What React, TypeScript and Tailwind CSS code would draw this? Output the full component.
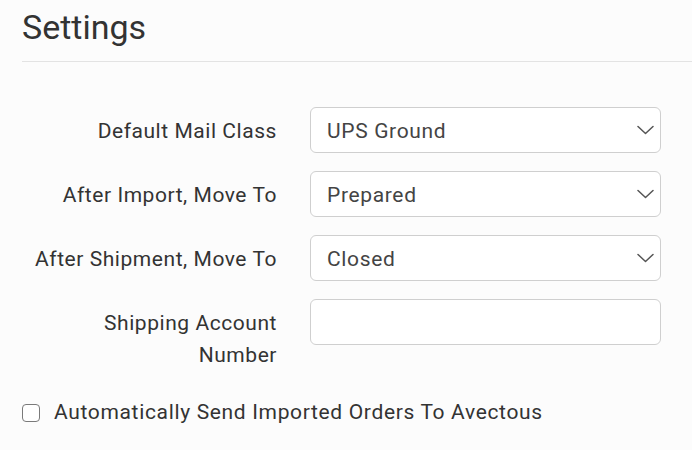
import { ChangeEvent, useState } from "react";

const font = { fontFamily: "Roboto, 'Liberation Sans', sans-serif" };

const Chevron = () => (
    <svg
        className="pointer-events-none absolute right-[7px] top-1/2 -translate-y-1/2"
        width="17"
        height="10"
        viewBox="0 0 17 10"
        fill="none"
    >
        <path d="M1 1.5 L8.5 8.5 L16 1.5" stroke="#555" strokeWidth="1.5" strokeLinecap="round" strokeLinejoin="round" />
    </svg>
);

type SelectProps = {
    value: string;
    options: string[];
    onChange: (v: string) => void;
};

const SelectBox = ({ value, options, onChange }: SelectProps) => (
    <div className="relative">
        <select
            value={value}
            onChange={(e: ChangeEvent<HTMLSelectElement>) => onChange(e.target.value)}
            className="h-[46px] w-full appearance-none rounded-[6px] border border-[#cfcfcf] bg-white pt-[3px] pl-[16px] pr-10 text-[21px] tracking-[0.65px] text-[#444] outline-none"
            style={font}
        >
            {options.map((o) => (
                <option key={o}>{o}</option>
            ))}
        </select>
        <Chevron />
    </div>
);

const Label = ({ children }: { children: string }) => (
    <div className="flex justify-end pt-[9px]">
        <label className="max-w-[250px] text-right text-[21px] leading-[31.5px] tracking-[0.55px] text-[#333]">
            {children}
        </label>
    </div>
);

const App = () => {
    const [mailClass, setMailClass] = useState("UPS Ground");
    const [afterImport, setAfterImport] = useState("Prepared");
    const [afterShipment, setAfterShipment] = useState("Closed");
    const [account, setAccount] = useState("");
    const [autoSend, setAutoSend] = useState(false);

    return (
        <div className="min-h-screen w-[692px] bg-[#fcfcfc] pb-8" style={font}>
            {/* Heading */}
            <div className="ml-[22px] border-b border-[#e3e3e3] pt-[7px] pb-[14px]">
                <h1 className="text-[34px] leading-[40px] text-[#333]">Settings</h1>
            </div>

            {/* Form */}
            <div className="mt-[45px] grid grid-cols-[255px_351px] gap-x-[33px] gap-y-[18px] pl-[22px]">
                <Label>Default Mail Class</Label>
                <SelectBox
                    value={mailClass}
                    onChange={setMailClass}
                    options={["UPS Ground", "UPS 2nd Day Air", "UPS Next Day Air"]}
                />

                <Label>After Import, Move To</Label>
                <SelectBox
                    value={afterImport}
                    onChange={setAfterImport}
                    options={["Prepared", "Open", "Closed"]}
                />

                <Label>After Shipment, Move To</Label>
                <SelectBox
                    value={afterShipment}
                    onChange={setAfterShipment}
                    options={["Closed", "Open", "Prepared"]}
                />

                <Label>Shipping Account Number</Label>
                <input
                    value={account}
                    onChange={(e) => setAccount(e.target.value)}
                    className="h-[46px] w-full rounded-[6px] border border-[#cfcfcf] bg-white px-[16px] text-[21px] text-[#444] outline-none"
                    style={font}
                />
            </div>

            {/* Checkbox */}
            <label className="mt-[26px] ml-[22px] flex cursor-pointer items-center gap-[14px]">
                <span
                    onClick={() => setAutoSend(!autoSend)}
                    className="flex h-[18px] w-[18px] items-center justify-center rounded-[4px] border-[1.5px] border-[#7a7a7a] bg-white"
                >
                    {autoSend && (
                        <svg width="12" height="12" viewBox="0 0 12 12" fill="none">
                            <path d="M2 6.5 L5 9 L10 3" stroke="#333" strokeWidth="1.8" />
                        </svg>
                    )}
                </span>
                <span className="text-[21px] leading-[31.5px] tracking-[0.66px] text-[#333]">
                    Automatically Send Imported Orders To Avectous
                </span>
            </label>
        </div>
    );
};

export default App;
